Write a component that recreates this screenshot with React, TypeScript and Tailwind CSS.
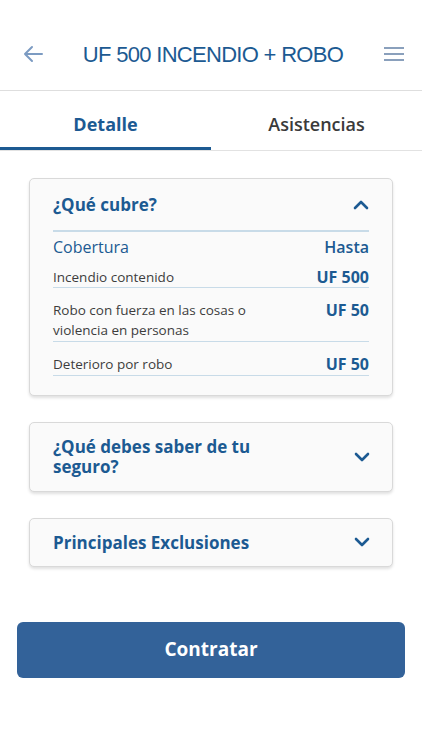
import React from 'react'

const blue = 'text-[#1c5a92]'

const Chevron = ({ up }: { up?: boolean }) => (
  <svg width="16" height="10" viewBox="0 0 16 10" className={up ? 'rotate-180' : ''}>
    <path d="M2 2 L8 8 L14 2" fill="none" stroke="#1c5a92" strokeWidth="2.6" strokeLinecap="round" strokeLinejoin="round" />
  </svg>
)

const rows = [
  { label: 'Incendio contenido', value: 'UF 500' },
  { label: 'Robo con fuerza en las cosas o violencia en personas', value: 'UF 50' },
  { label: 'Deterioro por robo', value: 'UF 50' },
]

const App = () => {
  return (
    <div className="flex min-h-[750px] w-[422px] flex-col bg-white font-['Open_Sans',sans-serif]">
      <header className="flex h-[91px] items-center justify-between border-b border-[#dedede] pl-[23px] pr-[17px] pt-[18px]">
        <svg width="20" height="18" viewBox="0 0 20 18">
          <path d="M19 9 H2 M9 2 L2 9 L9 16" fill="none" stroke="#7c9bc2" strokeWidth="2" strokeLinecap="round" strokeLinejoin="round" />
        </svg>
        <h1 className={`font-['Liberation_Sans',sans-serif] text-[22px] tracking-[-0.7px] ${blue}`}>UF 500 INCENDIO + ROBO</h1>
        <svg width="22" height="16" viewBox="0 0 22 16">
          <path d="M1 2 H21 M1 8 H21 M1 14 H21" stroke="#8aa0bc" strokeWidth="2" />
        </svg>
      </header>

      <nav className="flex h-[60px] border-b border-[#e2e2e2]">
        <div className="flex flex-1 items-center justify-center border-b-[3px] border-[#1c5a92] pt-[11px]">
          <span className={`text-[18px] font-bold ${blue}`}>Detalle</span>
        </div>
        <div className="flex flex-1 items-center justify-center pt-[8px]">
          <span className="text-[18px] font-semibold text-[#3a3a3a]">Asistencias</span>
        </div>
      </nav>

      <main className="flex flex-col gap-[26px] px-[29px] pt-[27px]">
        <section className="rounded-[5px] border border-[#d9d9d9] bg-[#fafafa] px-[23px] pb-[19px] pt-[13px] shadow-[0_2px_3px_rgba(0,0,0,0.12)]">
          <div className="flex items-center justify-between">
            <h2 className={`text-[17px] font-bold ${blue}`}>¿Qué cubre?</h2>
            <Chevron up />
          </div>
          <div className="mt-[12px] border-t-2 border-[#c8dbe8] pt-[5px]">
            <div className={`flex justify-between text-[16px] leading-[20px] ${blue}`}>
              <span>Cobertura</span>
              <span className="font-semibold">Hasta</span>
            </div>
            {rows.map((r, i) => (
              <div
                key={r.label}
                className={`flex items-start justify-between border-b border-[#c8dbe8] ${i === 0 ? 'pt-[10px]' : 'pb-[1px] pt-[12px]'}`}>
                <span className="w-[200px] text-[13.5px] leading-[20px] text-[#3d3d3d]">{r.label}</span>
                <span className={`text-[16px] font-bold leading-[20px] ${blue}`}>{r.value}</span>
              </div>
            ))}
          </div>
        </section>

        <section className="flex items-center justify-between rounded-[5px] border border-[#d9d9d9] bg-[#fafafa] pb-[14px] pl-[23px] pr-[22px] pt-[14px] shadow-[0_2px_3px_rgba(0,0,0,0.12)]">
          <h2 className={`w-[220px] text-[17px] font-bold leading-[20px] ${blue}`}>¿Qué debes saber de tu seguro?</h2>
          <Chevron />
        </section>

        <section className="flex items-center justify-between rounded-[5px] border border-[#d9d9d9] bg-[#fafafa] py-[13px] pl-[23px] pr-[22px] shadow-[0_2px_3px_rgba(0,0,0,0.12)]">
          <h2 className={`text-[17px] font-bold leading-[21px] ${blue}`}>Principales Exclusiones</h2>
          <Chevron />
        </section>
      </main>

      <div className="px-[17px] pt-[55px]">
        <button className="h-[56px] w-full rounded-[6px] bg-[#336299] text-[19px] font-bold text-white">Contratar</button>
      </div>
    </div>
  )
}

export default App
